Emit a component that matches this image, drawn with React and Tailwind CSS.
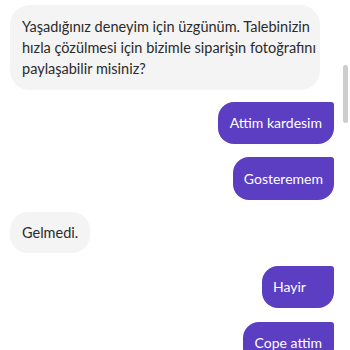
export default function App() {
  const font = { fontFamily: '"Lato", "Noto Sans", sans-serif' };
  return (
    <div className="relative w-[350px] h-[350px] overflow-hidden bg-white" style={font}>
      <div className="flex flex-col pl-[10px] pr-[16px] pt-[5px]">
        <div className="self-start w-[310px] rounded-[20px] bg-[#f4f4f4] px-[12px] py-[11px] text-[14.5px] leading-[21px] text-[#2b2b2b] whitespace-nowrap">
          Yaşadığınız deneyim için üzgünüm. Talebinizin<br />
          hızla çözülmesi için bizimle siparişin fotoğrafını<br />
          paylaşabilir misiniz?
        </div>
        <div className="self-end mt-[12px] rounded-[16px] rounded-tr-[3px] bg-[#5b3ec2] px-[12px] py-[11px] text-[14px] leading-[20px] text-white whitespace-nowrap">
          Attim kardesim
        </div>
        <div className="self-end mt-[13px] rounded-[16px] rounded-tr-[3px] bg-[#5b3ec2] px-[11px] py-[11px] text-[14px] leading-[21px] text-white whitespace-nowrap">
          Gosteremem
        </div>
        <div className="self-start mt-[12px] rounded-[18px] bg-[#f4f4f4] px-[12px] py-[10px] text-[14.5px] leading-[21px] text-[#2b2b2b]">
          Gelmedi.
        </div>
        <div className="self-end mt-[13px] min-w-[72px] rounded-[16px] rounded-tr-[3px] bg-[#5b3ec2] px-[11px] py-[11px] text-[14px] leading-[20px] text-white whitespace-nowrap">
          Hayir
        </div>
        <div className="self-end mt-[14px] rounded-[16px] rounded-tr-[3px] bg-[#5b3ec2] px-[12px] py-[11px] text-[14px] leading-[20px] text-white whitespace-nowrap">
          Cope attim
        </div>
      </div>
      <div className="absolute right-[2px] top-[65px] w-[5px] h-[58px] rounded-full bg-[#cdcdcd]" />
    </div>
  );
}
